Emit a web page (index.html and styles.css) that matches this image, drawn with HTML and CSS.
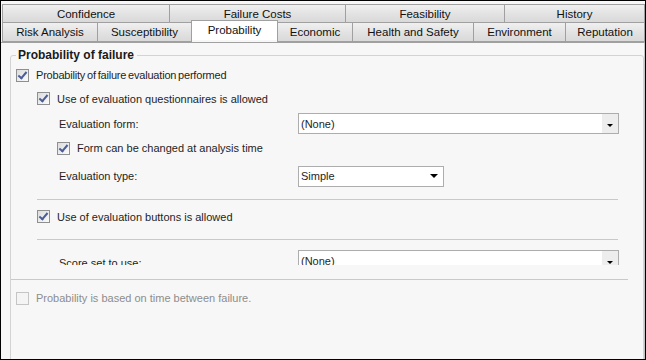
FILE: index.html
```html
<!DOCTYPE html>
<html lang="en">
<head>
    <meta charset="UTF-8">
    <title>Probability of failure</title>
    <link rel="stylesheet" href="styles.css">
</head>
<body>
    <div class="window">
        <div class="tabs">
            <div class="tab-row">
                <div class="tab t-conf">Confidence</div>
                <div class="tab t-cost">Failure Costs</div>
                <div class="tab t-feas">Feasibility</div>
                <div class="tab t-hist">History</div>
            </div>
            <div class="tab-row front">
                <div class="tab t-risk">Risk Analysis</div>
                <div class="tab t-susc">Susceptibility</div>
                <div class="tab t-prob active">Probability</div>
                <div class="tab t-econ">Economic</div>
                <div class="tab t-hse">Health and Safety</div>
                <div class="tab t-env">Environment</div>
                <div class="tab t-rep">Reputation</div>
            </div>
        </div>

        <div class="page">
            <fieldset class="group">
                <legend>Probability of failure</legend>

                <div class="row r-main">
                    <span class="cb checked"></span>
                    <span class="lbl tight">Probability of failure evaluation performed</span>
                </div>

                <div class="row r-quest indent1">
                    <span class="cb checked"></span>
                    <span class="lbl">Use of evaluation questionnaires is allowed</span>
                </div>

                <div class="row r-form">
                    <span class="field-lbl">Evaluation form:</span>
                    <div class="combo wide">
                        <span class="combo-text">(None)</span>
                        <span class="combo-btn"><span class="arrow small"></span></span>
                    </div>
                </div>

                <div class="row r-change indent2">
                    <span class="cb checked"></span>
                    <span class="lbl">Form can be changed at analysis time</span>
                </div>

                <div class="row r-type">
                    <span class="field-lbl">Evaluation type:</span>
                    <div class="combo short">
                        <span class="combo-text">Simple</span>
                        <span class="arrow big"></span>
                    </div>
                </div>

                <div class="sep sep-inner r-sep1"></div>

                <div class="row r-buttons indent1">
                    <span class="cb checked"></span>
                    <span class="lbl">Use of evaluation buttons is allowed</span>
                </div>

                <div class="sep sep-inner r-sep2"></div>

                <div class="clip">
                    <div class="row r-score">
                        <span class="field-lbl">Score set to use:</span>
                        <div class="combo wide">
                            <span class="combo-text">(None)</span>
                            <span class="combo-btn"><span class="arrow small"></span></span>
                        </div>
                    </div>
                </div>

                <div class="sep sep-full"></div>

                <div class="row r-time disabled">
                    <span class="cb"></span>
                    <span class="lbl">Probability is based on time between failure.</span>
                </div>
            </fieldset>
        </div>
    </div>
</body>
</html>
```

FILE: styles.css
```css
:root {
    --page-bg: #f7f7f7;
    --tab-border: #a0a0a0;
    --group-border: #d3d3d3;
    --text: #1e1e1e;
    --text-disabled: #8d8d8d;
    --check: #4a5d96;
}

html, body { margin: 0; padding: 0; }

body {
    font-family: "Liberation Sans", Arial, sans-serif;
    font-size: 11px;
    color: var(--text);
}

.window {
    width: 646px; height: 360px; box-sizing: border-box;
    border: 1px solid #000; background: var(--page-bg);
    display: flex; flex-direction: column; overflow: hidden;
}

/* Вкладки в два ряда */
.tabs { padding: 3px 0 0 1px; }
.tab-row { display: flex; }
.tab-row.front { margin-top: -1px; }

.tab {
    box-sizing: border-box; height: 19px; margin-right: -1px;
    border: 1px solid var(--tab-border);
    background: linear-gradient(#f0f0f0, #e3e3e3 50%, #d9d9d9);
    display: flex; align-items: center; justify-content: center;
    font-size: 11.5px; color: #111;
}
.tab-row.front .tab { height: 20px; }
.tab.active {
    position: relative; z-index: 2;
    height: 23px; margin-top: -2px; margin-bottom: -2px;
    background: #fff; border-bottom: none;
    align-items: flex-start; padding-top: 3px;
}

.t-conf { width: 168px; }
.t-cost { width: 177px; }
.t-feas { width: 160px; }
.t-hist { width: 141px; }
.t-risk { width: 96px; }
.t-susc { width: 95px; }
.t-prob { width: 87px; }
.t-econ { width: 76px; }
.t-hse  { width: 122px; }
.t-env  { width: 93px; }
.t-rep  { width: 80px; }

.page {
    position: relative; z-index: 1; flex: 1;
    border-top: 1px solid var(--tab-border);
    border-right: 1px solid #c4c4c4;
    padding: 5px 0 0 9px;
}

/* Групповой блок */
.group {
    margin: 0; padding: 0 0 0 5px; min-width: 0; height: 400px;
    border: 1px solid var(--group-border); border-radius: 3px;
}
.group legend {
    margin-left: 0; padding: 0 3px 0 2px;
    font-weight: bold; font-size: 12px; line-height: 14px; color: #1a1a1a;
}

.row { display: flex; align-items: center; }
.indent1 { padding-left: 21px; }
.indent2 { padding-left: 41px; }

.r-main { height: 24px; margin-top: 1px; }
.r-quest { height: 23px; }
.r-form { height: 27px; }
.r-change { height: 22px; }
.r-type { height: 22px; margin-top: 6px; }
.r-sep1 { margin-top: 12px; }
.r-buttons { height: 23px; margin-top: 5px; }
.r-sep2 { margin-top: 11px; }
.r-score { height: 21px; align-items: flex-start; }
.r-score .field-lbl { padding-top: 7px; }
.r-time { height: 22px; margin-top: 7px; }

.lbl { margin-left: 7px; }
.lbl.tight { word-spacing: -1px; letter-spacing: -0.2px; }
.field-lbl { width: 282px; padding-left: 43px; box-sizing: border-box; }

.cb {
    width: 13px; height: 13px; box-sizing: border-box; flex: none;
    border: 1px solid #8e8f8f;
    background: linear-gradient(135deg, #dcdcdc, #fbfbfb);
    position: relative;
}
.cb.checked::after {
    content: ""; position: absolute; left: 3px; top: 0px;
    width: 3px; height: 7px;
    border: solid var(--check); border-width: 0 2px 2px 0;
    transform: rotate(40deg);
}
.disabled .cb { border-color: #c5c5c5; background: #f4f4f4; }
.disabled .lbl { color: var(--text-disabled); }

/* Выпадающие списки */
.combo {
    box-sizing: border-box; height: 21px; background: #fff;
    border: 1px solid #adadad;
    display: flex; align-items: center;
}
.combo.wide { width: 321px; }
.combo.short { width: 146px; }
.combo-text { flex: 1; padding-left: 2px; }
.combo-btn {
    width: 16px; align-self: stretch; background: #ededed;
    display: flex; align-items: center; justify-content: center;
}
.arrow {
    width: 0; height: 0;
    border-left: 3px solid transparent; border-right: 3px solid transparent;
    border-top: 3px solid #000;
}
.arrow.small { margin-top: 3px; }
.arrow.big {
    border-left-width: 4px; border-right-width: 4px; border-top-width: 4px;
    margin-right: 5px;
}

.clip { height: 15px; overflow: hidden; margin-top: 10px; }

.sep { height: 1px; background: #c9c9c9; }
.sep-inner { margin-left: 21px; width: 581px; }
.sep-full { margin-left: -5px; width: 617px; margin-top: 14px; }
```
